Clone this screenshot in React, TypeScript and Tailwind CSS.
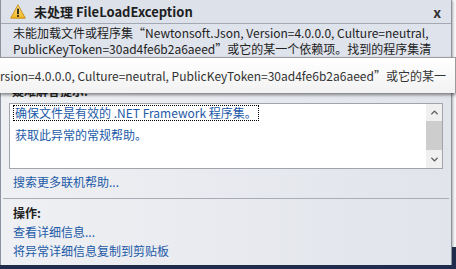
import { ChevronDown, ChevronUp } from "lucide-react";

const font = { fontFamily: '"Noto Sans CJK SC", "Noto Sans", sans-serif' };

function WarnIcon() {
  return (
    <svg width="16" height="15" viewBox="0 0 16 15" className="shrink-0">
      <defs>
        <linearGradient id="wg" x1="0" y1="0" x2="0" y2="1">
          <stop offset="0" stopColor="#ffe98a" />
          <stop offset="1" stopColor="#f1b521" />
        </linearGradient>
      </defs>
      <path d="M8 0.8 L15.3 14.2 L0.7 14.2 Z" fill="url(#wg)" stroke="#c58a12" strokeWidth="0.9" strokeLinejoin="round" />
      <rect x="7.1" y="4.6" width="1.8" height="5.6" fill="#222" />
      <rect x="7.1" y="11.1" width="1.8" height="1.8" fill="#222" />
    </svg>
  );
}

export default function App() {
  return (
    <div className="relative h-[269px] w-[456px] overflow-hidden bg-[#f4f5f7]" style={font}>
      {/* Exception dialog */}
      <div className="flex h-[265px] w-[452px] flex-col border-r border-l border-[#8d939e] bg-gradient-to-r from-[#eff0f3] to-[#e1e4eb] shadow-[1px_1px_2px_rgba(0,0,0,0.3)]">
        {/* Title bar */}
        <div className="flex h-[24px] items-center border-b border-[#a3a8b2] bg-[#dde1ea] pl-[9px] pr-[10px]">
          <WarnIcon />
          <span className="ml-[8px] text-[13px] font-bold text-[#1e1e1e]">未处理 FileLoadException</span>
          <span className="ml-auto text-[14px] font-bold leading-none text-[#333]">x</span>
        </div>
        {/* Message */}
        <div className="h-[34px] overflow-hidden bg-[#dfe3ec] px-[12px] pt-[1px] text-[12px] leading-[16px] text-[#222]">
          <div className="whitespace-nowrap">未能加载文件或程序集“Newtonsoft.Json, Version=4.0.0.0, Culture=neutral,</div>
          <div className="whitespace-nowrap">PublicKeyToken=30ad4fe6b2a6aeed”或它的某一个依赖项。找到的程序集清</div>
        </div>
        {/* Troubleshooting */}
        <div className="flex flex-col px-[8px] pt-[26px]">
          <div className="px-[3px] text-[12px] font-bold leading-[14px] text-[#222]">疑难解答提示:</div>
          <div className="mt-[5px] flex h-[66px] border border-[#a0a4ab] bg-white">
            <div className="flex flex-1 flex-col pl-[3px] pt-[1px] text-[12px] text-[#1c5aa8]">
              <span className="w-fit border border-dotted border-black px-[1px] leading-[14px]">确保文件是有效的 .NET Framework 程序集。</span>
              <span className="mt-[7px] px-[2px] leading-[14px]">获取此异常的常规帮助。</span>
            </div>
            <div className="flex w-[16px] flex-col items-center bg-[#f0f0f0] text-[#555]">
              <div className="flex h-[17px] items-center">
                <ChevronUp size={11} strokeWidth={3} />
              </div>
              <div className="h-[29px] w-full bg-[#cdcdcd]" />
              <div className="mt-auto flex h-[17px] items-center">
                <ChevronDown size={11} strokeWidth={3} />
              </div>
            </div>
          </div>
          <div className="mt-[5px] px-[4px] text-[12px] leading-[16px] text-[#1c5aa8]">搜索更多联机帮助...</div>
        </div>
        <div className="mx-[2px] mt-[8px] border-t border-[#a9adb5]" />
        <div className="flex flex-col px-[12px] pt-[4px] text-[12px] leading-[19px]">
          <div className="font-bold text-[#222]">操作:</div>
          <div className="text-[#1c5aa8]">查看详细信息...</div>
          <div className="text-[#1c5aa8]">将异常详细信息复制到剪贴板</div>
        </div>
      </div>
      {/* Navy desktop strip */}
      <div className="absolute bottom-0 left-0 h-[4px] w-full bg-[#1f2c4c]" />
      <div className="absolute bottom-0 right-0 h-[22px] w-[4px] bg-[#1f2c4c]" />
      {/* Floating tooltip */}
      <div className="absolute left-0 top-[57px] flex h-[36px] w-[456px] items-center border-t border-r border-[#9a9a9a] bg-gradient-to-b from-white to-[#f2f2f2] shadow-[0_2px_3px_rgba(0,0,0,0.45)]">
        <span className="whitespace-nowrap text-[12px] text-[#333]">rsion=4.0.0.0, Culture=neutral, PublicKeyToken=30ad4fe6b2a6aeed”或它的某一</span>
      </div>
    </div>
  );
}
